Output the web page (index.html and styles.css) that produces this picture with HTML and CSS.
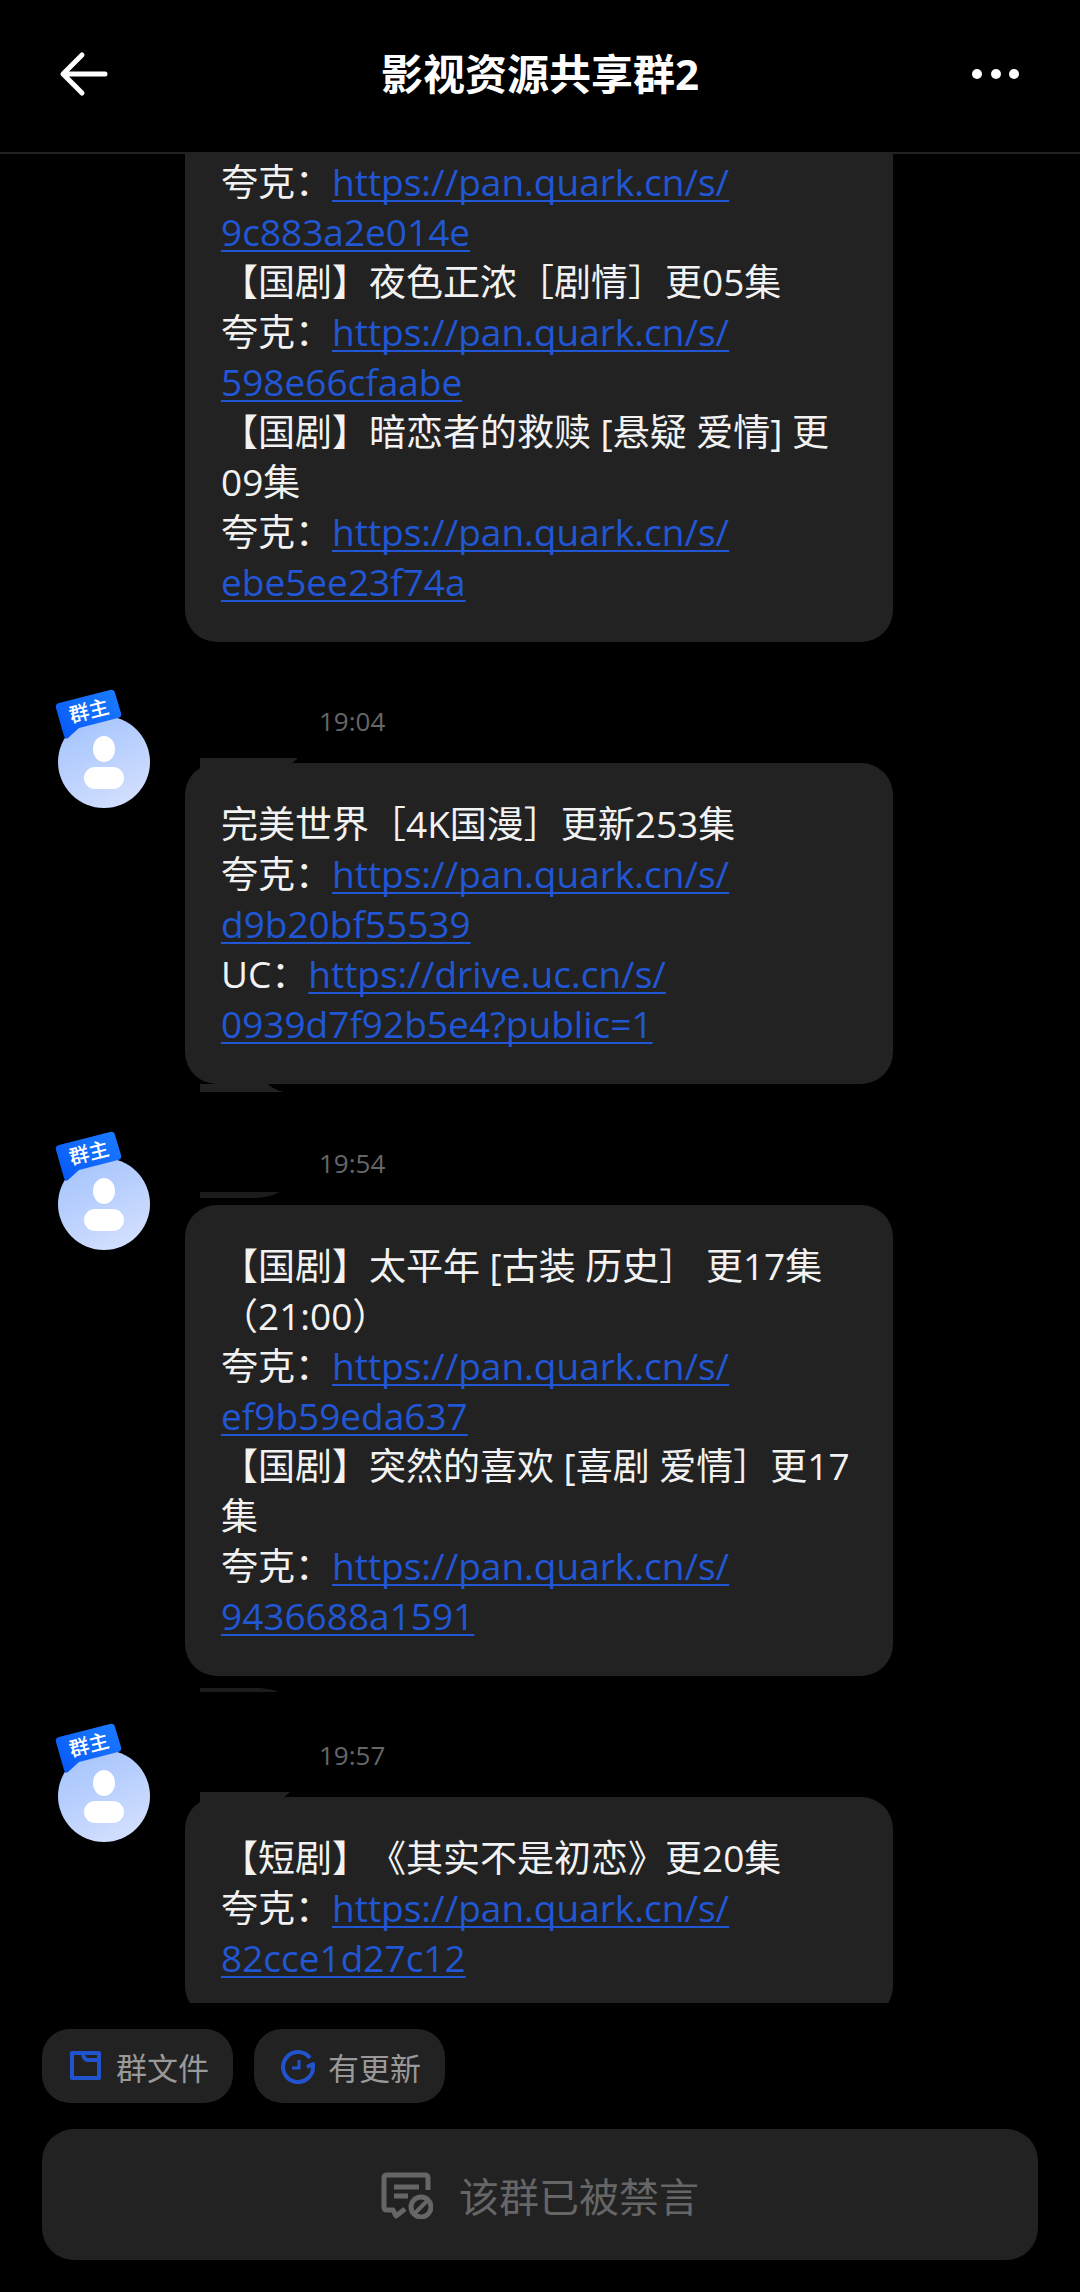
FILE: index.html
```html
<!DOCTYPE html>
<html lang="zh-CN">
<head>
<meta charset="utf-8">
<meta name="viewport" content="width=device-width, initial-scale=1">
<title>影视资源共享群2</title>
<link rel="stylesheet" href="styles.css">
</head>
<body>
<svg class="sprite" aria-hidden="true">
  <defs>
    <linearGradient id="face" x1="0.2" y1="0" x2="0.7" y2="1">
      <stop offset="0" stop-color="#a3c3fd"/>
      <stop offset="1" stop-color="#d3dffe"/>
    </linearGradient>
    <linearGradient id="flag" x1="0" y1="1" x2="1" y2="0">
      <stop offset="0" stop-color="#0656f8"/>
      <stop offset="1" stop-color="#1b7dff"/>
    </linearGradient>
    <symbol id="avatar" viewBox="0 0 96 120">
      <circle cx="48" cy="73" r="46" fill="url(#face)"/>
      <ellipse cx="48" cy="60" rx="11" ry="13" fill="#fff"/>
      <rect x="28" y="78" width="40" height="22" rx="11" fill="#fff"/>
      <path d="M3 14 L54 1 Q58 0 59 4 L65 24 Q66 28 62 29 L23 39 L12 49 Q9 51 8 47 L0 19 Q-1 15 3 14Z" fill="url(#flag)"/>
    </symbol>
  </defs>
</svg>
<div class="app">
  <header class="topbar">
    <button class="icon-button" type="button" aria-label="返回">
      <svg width="52" height="48" viewBox="0 0 52 48" fill="none" stroke="#fff" stroke-width="5" stroke-linecap="round" stroke-linejoin="round"><path d="M24 5 L5 24 L24 43 M6 24 H47"/></svg>
    </button>
    <h1 class="title">影视资源共享群2</h1>
    <button class="icon-button" type="button" aria-label="更多">
      <svg width="52" height="48" viewBox="0 0 52 48" fill="#fff"><circle cx="7" cy="24" r="5"/><circle cx="26" cy="24" r="5"/><circle cx="44" cy="24" r="5"/></svg>
    </button>
  </header>

  <main class="chat">
    <article class="message message-continued">
      <div class="bubble">
        <p>夸克：<a href="https://pan.quark.cn/s/9c883a2e014e">https://pan.quark.cn/s/<br>9c883a2e014e</a></p>
        <p>【国剧】夜色正浓［剧情］更05集</p>
        <p>夸克：<a href="https://pan.quark.cn/s/598e66cfaabe">https://pan.quark.cn/s/<br>598e66cfaabe</a></p>
        <p>【国剧】暗恋者的救赎 [悬疑 爱情] 更<br>09集</p>
        <p>夸克：<a href="https://pan.quark.cn/s/ebe5ee23f74a">https://pan.quark.cn/s/<br>ebe5ee23f74a</a></p>
      </div>
    </article>

    <article class="message">
      <div class="sender"><svg class="avatar"><use href="#avatar"/></svg><span class="role">群主</span></div>
      <time class="time">19:04</time>
      <div class="bubble">
        <svg class="smear smear-top" viewBox="0 0 120 20" fill="#222"><path d="M8 0 H106 L98 7 H40 V15 H8Z"/></svg>
        <p>完美世界［4K国漫］更新253集</p>
        <p>夸克：<a href="https://pan.quark.cn/s/d9b20bf55539">https://pan.quark.cn/s/<br>d9b20bf55539</a></p>
        <p>UC：<a href="https://drive.uc.cn/s/0939d7f92b5e4?public=1">https://drive.uc.cn/s/<br>0939d7f92b5e4?public=1</a></p>
        <svg class="smear smear-bottom" viewBox="0 0 120 20" fill="#222"><path d="M8 0 H76 Q82 6 92 8 H8Z"/></svg>
      </div>
    </article>

    <article class="message">
      <div class="sender"><svg class="avatar"><use href="#avatar"/></svg><span class="role">群主</span></div>
      <time class="time">19:54</time>
      <div class="bubble">
        <svg class="smear smear-above" viewBox="0 0 120 20" fill="#1c1c1c"><path d="M8 0 H88 Q76 6 62 6 H8Z"/></svg>
        <p>【国剧】太平年 [古装 历史］ 更17集<br>（21:00）</p>
        <p>夸克：<a href="https://pan.quark.cn/s/ef9b59eda637">https://pan.quark.cn/s/<br>ef9b59eda637</a></p>
        <p>【国剧】突然的喜欢 [喜剧 爱情］更17<br>集</p>
        <p>夸克：<a href="https://pan.quark.cn/s/9436688a1591">https://pan.quark.cn/s/<br>9436688a1591</a></p>
        <svg class="smear smear-below" viewBox="0 0 120 20" fill="#1c1c1c"><path d="M8 0 H68 Q80 1 87 4 H8Z"/></svg>
      </div>
    </article>

    <article class="message">
      <div class="sender"><svg class="avatar"><use href="#avatar"/></svg><span class="role">群主</span></div>
      <time class="time">19:57</time>
      <div class="bubble">
        <svg class="smear smear-top" viewBox="0 0 120 20" fill="#222"><path d="M8 0 H98 L90 7 H40 V11 H8Z"/></svg>
        <p>【短剧】《其实不是初恋》更20集</p>
        <p>夸克：<a href="https://pan.quark.cn/s/82cce1d27c12">https://pan.quark.cn/s/<br>82cce1d27c12</a></p>
      </div>
    </article>
  </main>

  <footer class="composer">
    <div class="chips">
      <button class="chip" type="button">
        <svg width="36" height="36" viewBox="0 0 36 36" fill="none" stroke="#2253cf" stroke-width="4" stroke-linejoin="round"><path d="M4 5 H31 V30 H4Z M15 6 Q16 12 20 12 H31"/></svg>
        群文件
      </button>
      <button class="chip" type="button">
        <svg width="36" height="36" viewBox="0 0 36 36" fill="none" stroke="#2253cf" stroke-width="4"><path d="M30 10 A15 15 0 1 0 33 18 V16 L27 19" stroke-linejoin="round"/><path d="M19 12 V20 H12" stroke-width="3"/></svg>
        有更新
      </button>
    </div>
    <div class="muted" role="status">
      <svg width="52" height="48" viewBox="0 0 52 48" fill="none" stroke="#666" stroke-width="5" stroke-linejoin="round"><path d="M47 19 V7 Q47 4 44 4 H6 Q3 4 3 7 V36 Q3 39 6 39 H12 L15 45 L24 38"/><path d="M13 16 H38 M13 25 H27"/><circle cx="40" cy="36" r="10"/><path d="M34 42 L46 30" stroke-width="4"/></svg>
      <span>该群已被禁言</span>
    </div>
  </footer>
</div>
</body>
</html>
```
FILE: styles.css
```css
* { box-sizing: border-box; }

body {
  margin: 0;
  background: #000;
  color: #f2f2f2;
  font-family: "Open Sans", "Noto Sans CJK SC", sans-serif;
  text-spacing-trim: space-all;
}

h1, p { margin: 0; }

button {
  border: 0;
  padding: 0;
  background: none;
  color: inherit;
  font: inherit;
  cursor: pointer;
}

.sprite {
  position: absolute;
  width: 0;
  height: 0;
}

.app {
  display: flex;
  flex-direction: column;
  height: 100vh;
}

/* Top bar */
.topbar {
  flex: none;
  display: flex;
  align-items: center;
  justify-content: space-between;
  height: 154px;
  padding: 0 58px 5px;
  border-bottom: 2px solid #222;
}

.icon-button { display: flex; }

.title {
  color: #fff;
  font-size: 42px;
  line-height: 60px;
  font-weight: 700;
}

/* Conversation */
.chat {
  flex: 1;
  min-height: 0;
  overflow: hidden;
}

.message {
  display: grid;
  grid-template-columns: 129px minmax(0, 708px);
  grid-template-rows: 121px auto;
  padding: 0 56px;
}

.message-continued { grid-template-rows: auto; }

.sender {
  position: relative;
  grid-row: 1 / 3;
  padding-top: 47px;
}

.avatar {
  display: block;
  width: 96px;
  height: 120px;
}

.role {
  position: absolute;
  top: 55px;
  left: 13px;
  color: #fff;
  font-size: 20px;
  line-height: 28px;
  font-weight: 500;
  transform: rotate(-14deg);
}

.time {
  grid-column: 2;
  padding: 63px 0 0 134px;
  color: #666;
  font-size: 26px;
  line-height: 32px;
}

.bubble {
  position: relative;
  grid-column: 2;
  padding: 36px 36px 35px;
  border-radius: 32px;
  background: #222;
  font-size: 37px;
  line-height: 50px;
}

.message-continued .bubble {
  padding-top: 3px;
  border-radius: 0 0 32px 32px;
}

.bubble a {
  color: #2156d4;
  text-decoration-thickness: 2px;
  text-underline-offset: 4px;
  text-decoration-skip-ink: none;
}

/* Remains of the blanked sender names around a bubble */
.smear {
  position: absolute;
  left: 7px;
  width: 120px;
  height: 20px;
}

.smear-top { top: -5px; }
.smear-above { top: -13px; }
.smear-bottom { top: 100%; }
.smear-below { top: calc(100% + 12px); }

/* Bottom area */
.composer {
  flex: none;
  display: flex;
  flex-direction: column;
  gap: 26px;
  padding: 26px 42px 32px;
}

.chips {
  display: flex;
  gap: 21px;
}

.chip {
  display: flex;
  align-items: center;
  gap: 12px;
  height: 74px;
  padding: 0 24px 0 26px;
  border-radius: 28px;
  background: #222;
  color: #999;
  font-size: 31px;
}

.muted {
  display: flex;
  align-items: center;
  justify-content: center;
  gap: 26px;
  height: 131px;
  border-radius: 32px;
  background: #222;
  color: #666;
  font-size: 40px;
}
```
